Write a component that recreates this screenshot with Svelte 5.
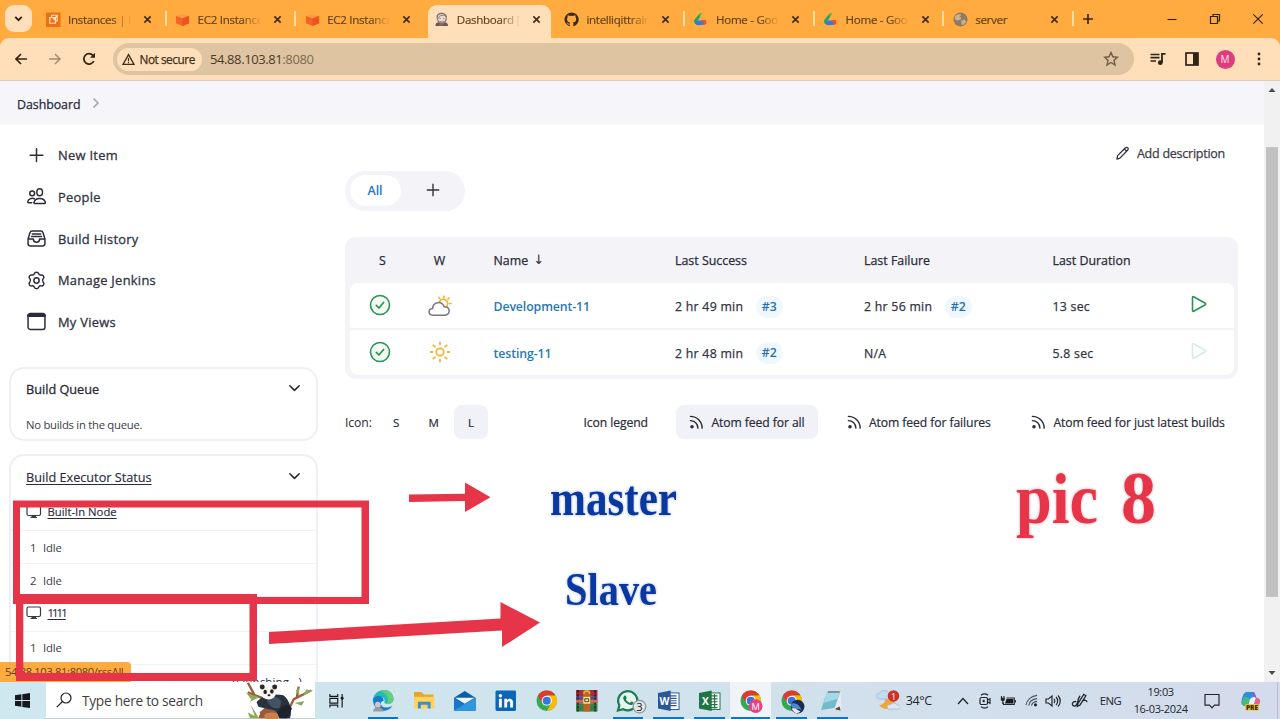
<script>
  const tabs = [
    { icon: 'ec2', title: 'Instances | E', fade: true },
    { icon: 'cube', title: 'EC2 Instance', fade: true },
    { icon: 'cube', title: 'EC2 Instance', fade: true, nosep: true },
    { icon: 'jenkins', title: 'Dashboard [', fade: true, active: true, nosep: true },
    { icon: 'github', title: 'intelliqittrain', fade: true },
    { icon: 'drive', title: 'Home - Goo', fade: true },
    { icon: 'drive', title: 'Home - Goo', fade: true },
    { icon: 'globe', title: 'server' }
  ];
  const tasks = [
    { icon: 'plus', label: 'New Item' },
    { icon: 'people', label: 'People' },
    { icon: 'history', label: 'Build History' },
    { icon: 'gear', label: 'Manage Jenkins' },
    { icon: 'window', label: 'My Views' }
  ];
  const jobs = [
    { weather: 'cloudy', name: 'Development-11', ok: '2 hr 49 min', okNo: '#3', bad: '2 hr 56 min', badNo: '#2', time: '13 sec' },
    { weather: 'sunny', name: 'testing-11', ok: '2 hr 48 min', okNo: '#2', bad: 'N/A', time: '5.8 sec', off: true }
  ];
  const apps = [
    { icon: 'taskview' }, { icon: 'edge', open: true }, { icon: 'folder' }, { icon: 'mail' },
    { icon: 'linkedin' }, { icon: 'chrome' }, { icon: 'winrar' }, { icon: 'whatsapp', open: true },
    { icon: 'word', open: true }, { icon: 'excel', open: true }, { icon: 'chromeM', open: true, active: true },
    { icon: 'chromeB', open: true }, { icon: 'notepad', open: true }
  ];
  const gearPoints = 'M9 1.2c1.200 0 1.800.5 2.100 1.500.3.900 1.200 1.300 2.100 1.100 1.200-.3 2 0 2.500 1 .6 1 .4 1.800-.4 2.600-.7.8-.7 2.300 0 3.100.8.8 1 1.700.4 2.700-.5.9-1.300 1.200-2.500.9-.9-.2-1.800.3-2.100 1.200-.3 1-.9 1.500-2.100 1.500s-1.800-.5-2.100-1.500c-.3-.9-1.200-1.400-2.100-1.200-1.200.3-2 0-2.500-.9-.6-1-.4-1.900.4-2.700.7-.8.7-2.300 0-3.100-.8-.8-1-1.600-.4-2.600.5-1 1.300-1.300 2.500-1 .9.200 1.800-.2 2.100-1.100.3-1 .9-1.500 2.100-1.500z';
</script>

{#snippet chromeLogo()}
  <circle cx="11" cy="11" r="10.500" fill="#34a853" />
  <path d="M1.900 5.700A10.500 10.500 0 0 1 20.100 5.700H11L6.500 13.600z" fill="#e0392d" />
  <path d="M20.100 5.700A10.500 10.500 0 0 1 11 21.500L15.600 13.600 11 5.700z" fill="#fbbc05" />
  <circle cx="11" cy="11" r="5.200" fill="#fff" /><circle cx="11" cy="11" r="4.100" fill="#3575dc" />
{/snippet}

{#snippet favicon(name)}
  <svg class="fav" viewBox="0 0 16 16">
    {#if name === 'ec2'}
      <rect width="15.500" height="15.500" y=".5" fill="#ec7211" /><path d="M4 6h6v6H4zM6 6V3.500h6v6h-2M8 8l4-4" fill="none" stroke="#ffe3c0" stroke-width="1.200" />
    {:else if name === 'cube'}
      <path d="M1 4l7 2.500L15 4v8l-7 3-7-3z" fill="#f26522" /><path d="M1 4l7-2 7 2-7 3z" fill="#ff9a48" /><path d="M8 7l7-3v8l-7 3z" fill="#ef5420" />
    {:else if name === 'jenkins'}
      <path d="M1.500 15c0-3 2-4 3-4h6.500c2 0 4 1 4 4z" fill="#6a5957" /><path d="M3.500 5C4 1 12 0 13 5c.4 4-1 7-4.500 7S3 9 3.500 5z" fill="#eadbd0" stroke="#85766f" stroke-width="1.200" /><path d="M3 5c1-5 9-5 10 0-2-2-4-2-6-1-1 0-2 1-2 3M6 7h1m3 0h1M6 10c2 1 3 1 5 0" fill="none" stroke="#7c6c66" stroke-width="1" /><path d="M6 12.500l3 .5 1 1.500H5z" fill="#b75a50" />
    {:else if name === 'github'}
      <path d="M8 .5a7.500 7.500 0 0 0-2.400 14.600c.4.100.6-.2.600-.4v-1.400c-2 .5-2.600-.9-2.600-.9-.3-.8-.8-1.100-.8-1.100-.7-.5 0-.5 0-.5.8.1 1.200.8 1.200.8.700 1.200 1.800.8 2.200.6.100-.5.300-.8.500-1-1.700-.2-3.500-.8-3.500-3.700 0-.8.3-1.500.8-2-.1-.2-.4-1 .1-2 0 0 .6-.2 2.100.8a7 7 0 0 1 3.800 0c1.500-1 2.100-.8 2.100-.8.4 1 .2 1.800.1 2 .5.500.8 1.200.8 2 0 2.900-1.800 3.500-3.500 3.700.3.200.5.700.5 1.400v2.100c0 .2.100.5.600.4A7.500 7.500 0 0 0 8 .5z" fill="#3c2a18" />
    {:else if name === 'drive'}
      <path d="M7 1.500h3L5 9 4.500 13.500 1.500 12 1 9z" fill="#1ea55b" /><path d="M4.500 14L2 12l3-3h9l-1.500 4.500z" fill="#3678e0" /><path d="M8.500 8.500h5L14.500 12l-2 1.500z" fill="#e55438" /><path d="M7 1.500h3L7 6z" fill="#79c142" />
    {:else}
      <circle cx="8" cy="8" r="7.500" fill="#8c7b65" /><path d="M2 5c2-3 5-3 7-2l-2 2 2 1-1 2-3 1-3-1zM9 9l3-1 2 2-3 4-2-1z" fill="#cbb28f" />
    {/if}
  </svg>
{/snippet}

{#snippet feed()}
  <svg class="feed" viewBox="0 0 16 16"><g fill="none" stroke="#2b2b3a" stroke-width="1.500" stroke-linecap="round"><path d="M1.500 1.500c7 0 12.500 5.500 12.500 12.500M1.500 6c4.500 0 8 3.500 8 8" /></g><circle cx="3.200" cy="12.500" r="1.900" fill="#2b2b3a" /></svg>
{/snippet}

{#snippet monitor()}
  <svg class="monitor" viewBox="0 0 16 14"><rect x="1" y="1" width="13.500" height="9.500" rx="1.500" fill="none" stroke="#3a3a44" stroke-width="1.200" /><path d="M4.500 12.500h6.500M6 10.500h3.500v2H6z" stroke="#3a3a44" fill="#3a3a44" /></svg>
{/snippet}

{#snippet chevron()}
  <svg class="chev" viewBox="0 0 12 12"><path d="M1.700 3.500L6 7.700l4.300-4.200" fill="none" stroke="#2b2b3a" stroke-width="1.500" stroke-linecap="round" stroke-linejoin="round" /></svg>
{/snippet}

<div class="screen">
  <div class="strip">
    <button class="tabmenu" aria-label="Search tabs"><svg viewBox="0 0 12 12"><path d="M3 4.500l3 3 3-3" fill="none" stroke="#2e2010" stroke-width="1.700" /></svg></button>
    {#each tabs as t}
      <div class="tab" class:active={t.active} class:sep={!t.nosep}>
        {@render favicon(t.icon)}
        <span class="title" class:fade={t.fade}>{t.title}</span>
        <svg class="x" viewBox="0 0 10 10"><path d="M1.500 1.500l7 7m0-7l-7 7" stroke="#3a2812" stroke-width="1.700" /></svg>
      </div>
    {/each}
    <svg class="newtab" viewBox="0 0 12 12"><path d="M6 1v10M1 6h10" stroke="#3a2510" stroke-width="1.700" /></svg>
    <div class="winctl">
      <svg viewBox="0 0 12 12"><path d="M1.500 6.500h9" stroke="#2e1e0a" stroke-width="1.100" /></svg>
      <svg viewBox="0 0 12 12"><path d="M1.500 3.500h7v7h-7zM4 3.500v-2h6.500v6.500h-2" fill="none" stroke="#2e1e0a" stroke-width="1.200" /></svg>
      <svg viewBox="0 0 12 12"><path d="M1.300 1.300l9.400 9.400m0-9.400l-9.400 9.400" stroke="#2e1e0a" stroke-width="1.100" /></svg>
    </div>
  </div>

  <div class="toolbar">
    <svg class="nav" viewBox="0 0 14 14"><path d="M13 7H2m5-5L2 7l5 5" fill="none" stroke="#33230f" stroke-width="1.700" /></svg>
    <svg class="nav" viewBox="0 0 14 14"><path d="M1 7h11M7 2l5 5-5 5" fill="none" stroke="#a68d6e" stroke-width="1.500" /></svg>
    <svg class="nav" viewBox="0 0 14 14"><path d="M11.800 9A5.200 5.200 0 1 1 11 3.500l1 1.500" fill="none" stroke="#33230f" stroke-width="1.800" /><path d="M13 .8v5H8z" fill="#33230f" /></svg>
    <div class="omni">
      <span class="chip"><svg viewBox="0 0 14 14"><path d="M7 1.700L13 12.300H1z" fill="none" stroke="#3f301d" stroke-width="1.500" /><path d="M7 5.500v3.300M7 9.800v1.300" stroke="#3f301d" stroke-width="1.300" /></svg>Not secure</span>
      <span class="url">54.88.103.81<i>:8080</i></span>
      <svg class="star" viewBox="0 0 16 16"><path d="M8 1.500l1.900 4.300 4.600.4-3.500 3.100 1 4.700L8 11.500 4 14l1-4.700L1.500 6.200l4.600-.4z" fill="none" stroke="#6d5c46" stroke-width="1.400" /></svg>
    </div>
    <svg class="music" viewBox="0 0 16 14"><path d="M.5 2.500h9M.5 5.700h9M.5 9h5.500" stroke="#2f2415" stroke-width="1.700" /><path d="M12 10.500V1.800h3.500" fill="none" stroke="#2f2415" stroke-width="1.800" /><circle cx="10.300" cy="10.700" r="2.400" fill="#2f2415" /></svg>
    <svg class="panel" viewBox="0 0 14 14"><rect x="1" y="1" width="12" height="12" fill="none" stroke="#2f2415" stroke-width="1.700" /><path d="M8 1h5v12H8z" fill="#2f2415" /></svg>
    <span class="avatar">M</span>
    <svg class="dots" viewBox="0 0 4 14"><g fill="#2f2415"><circle cx="2" cy="2" r="1.400" /><circle cx="2" cy="7" r="1.400" /><circle cx="2" cy="12" r="1.400" /></g></svg>
  </div>

  <div class="view">
    <div class="page">
      <div class="crumbs">Dashboard<svg viewBox="0 0 8 12"><path d="M1.500 1.500L6 6l-4.500 4.500" fill="none" stroke="#a3a3ac" stroke-width="1.500" /></svg></div>
      <div class="cols">
        <aside>
          <nav>
            {#each tasks as t}
              <a class="task" href="#top">
                <svg viewBox="0 0 18 18"><g fill="none" stroke="#2b2b3a" stroke-width="1.400" stroke-linecap="round" stroke-linejoin="round">
                  {#if t.icon === 'plus'}<path d="M9 2.700v12M3 8.700h12" />
                  {:else if t.icon === 'people'}<ellipse cx="12" cy="5" rx="2.700" ry="3.300" /><circle cx="4.900" cy="6" r="2.300" /><path d="M12 10.800c-3 0-5 1.600-5.400 4.100 0 .5.200.8.700.8h9.400c.5 0 .8-.4.700-.8-.4-2.500-2.400-4.100-5.400-4.100zM7 11.100c-2.800-1.200-6.100.5-6.300 3.100 0 .5.200.7.600.7h3.200" />
                  {:else if t.icon === 'history'}<path d="M1 9.500v4.200c0 1.500.9 2.300 2.300 2.300h11.400c1.500 0 2.300-.8 2.300-2.300V9.500l-1.700-5.700C14.900 2.500 14.300 2 13 2H5c-1.300 0-1.900.5-2.300 1.800zM1 9.500h5c0 2 1.500 3 3 3s3-1 3-3h5M5 4.700h8M4.300 7.200h9.400" />
                  {:else if t.icon === 'gear'}<path d={gearPoints} /><circle cx="9" cy="9" r="2.500" />
                  {:else}<rect x="1" y="1.500" width="16" height="15" rx="2" /><path d="M1.500 3.300h15" stroke-width="3" />{/if}
                </g></svg>{t.label}
              </a>
            {/each}
          </nav>
          <section class="box queue">
            <header><b>Build Queue</b>{@render chevron()}</header>
            <p>No builds in the queue.</p>
          </section>
          <section class="box exec">
            <header><b><u>Build Executor Status</u></b>{@render chevron()}</header>
            <div class="node first">{@render monitor()}<u>Built-In Node</u></div>
            <div class="idle"><span>1</span>Idle</div>
            <div class="idle"><span>2</span>Idle</div>
            <div class="node second">{@render monitor()}<u>1111</u></div>
            <div class="idle"><span>1</span>Idle</div>
            <div class="launch">(launching...)</div>
          </section>
        </aside>

        <main>
          <div class="desc"><svg viewBox="0 0 16 16"><path d="M2 14l.8-3.700L11.200 1.900c.8-.7 1.800-.7 2.400 0 .7.700.7 1.700 0 2.400L5.300 12.900zM9.900 3.200l2.600 2.600" fill="none" stroke="#2b2b3a" stroke-width="1.300" stroke-linejoin="round" /></svg>Add description</div>
          <div class="pills"><span class="all">All</span><svg viewBox="0 0 14 14"><path d="M7 1.300v11.400M1.300 7h11.400" stroke="#33333f" stroke-width="1.400" stroke-linecap="round" /></svg></div>
          <div class="table">
            <div class="row head"><span class="c s">S</span><span class="c">W</span><span>Name <em>↓</em></span><span>Last Success</span><span>Last Failure</span><span>Last Duration</span><span></span></div>
            {#each jobs as j}
              <div class="row job">
                <span class="c"><svg class="big" viewBox="0 0 22 22"><circle cx="11" cy="11" r="9.500" fill="#f3fbf5" stroke="#2a9454" stroke-width="1.600" /><path d="M7.300 11.300l2.600 2.700 4.700-5.500" fill="none" stroke="#2a9454" stroke-width="1.700" stroke-linecap="round" stroke-linejoin="round" /></svg></span>
                <span class="c"><svg class="wx" viewBox="0 0 24 22">
                  {#if j.weather === 'cloudy'}
                    <g stroke="#f0b83c" stroke-width="1.700" fill="none" stroke-linecap="round"><path d="M11.500 6.500a4.300 4.300 0 1 1 6.500 5.300M16 1v1.500M11 2.500l.9 1.200M21 3l-1 1.200M23 8.500h-1.500" /></g>
                    <path d="M5 20.200c-5 0-5.300-6.200-.4-6.600C5 6.500 14 5.500 16 11.800c7-.2 6.500 8.400 1 8.400z" fill="#fff" stroke="#77777f" stroke-width="1.500" />
                  {:else}
                    <g stroke="#f0b83c" stroke-width="1.800" fill="none" stroke-linecap="round"><circle cx="12" cy="11" r="3.700" /><path d="M12 1.500v2M12 18.500v2M2.500 11h2M19.500 11h2M5.300 4.300l1.400 1.400M17.300 16.300l1.400 1.400M5.300 17.700l1.400-1.400M17.300 5.700l1.400-1.400" /></g>
                  {/if}
                </svg></span>
                <span class="name">{j.name}</span>
                <span>{j.ok}<b class="no">{j.okNo}</b></span>
                <span>{j.bad}{#if j.badNo}<b class="no">{j.badNo}</b>{/if}</span>
                <span>{j.time}</span>
                <span class="c"><svg class="play" class:off={j.off} viewBox="0 0 18 18"><path d="M2.500 2.500v13c0 .7.6 1 1.200.7L15.300 9.700c.6-.4.6-1 0-1.400L3.700 1.800c-.6-.3-1.200 0-1.200.7z" fill="none" stroke="#2a9454" stroke-width="1.600" /></svg></span>
              </div>
            {/each}
          </div>
          <div class="foot">
            <span class="lbl">Icon:</span><span class="size">S</span><span class="size">M</span><span class="size on">L</span>
            <span class="legend">Icon legend</span>
            <span class="atom on">{@render feed()}Atom feed for all</span>
            <span class="atom fail">{@render feed()}Atom feed for failures</span>
            <span class="atom last">{@render feed()}Atom feed for just latest builds</span>
          </div>
        </main>
      </div>
    </div>
    <div class="scroll"><svg viewBox="0 0 8 6"><path d="M4 1l3.500 4h-7z" fill="#4c4c4c" /></svg><div class="thumb"></div><svg viewBox="0 0 8 6"><path d="M4 5L.5 1h7z" fill="#4c4c4c" /></svg></div>
    <div class="status">54.88.103.81:8080/rssAll</div>
  </div>

  <footer class="taskbar">
    <div class="start"><svg viewBox="0 0 16 16"><path d="M0 2.300L6.800 1.300v6.200H0zM7.800 1.200L16 0v7.500H7.800zM0 8.500h6.800v6.200L0 13.700zM7.800 8.500H16V16l-8.200-1.200z" fill="#15181c" /></svg></div>
    <div class="search">
      <svg class="lens" viewBox="0 0 16 16"><circle cx="10" cy="6" r="5" fill="none" stroke="#222" stroke-width="1.200" /><path d="M6.500 9.500L.8 15.200" stroke="#222" stroke-width="1.200" /></svg>
      <span>Type here to search</span>
      <svg class="panda" viewBox="0 0 70 37">
        <path d="M2 0l7 13 14 5M68 8L50 17 40 37M9 13L2 10M53 16l2-12M23 37l-8-7" fill="none" stroke="#9b5c3c" stroke-width="2.500" />
        <path d="M0 10l12 5-7 2zM14 15l-10 5 4-7zM5 23l8 13-3 1zM2 31l12 6H4zM55 5l1 9-4-6zM70 8l-11 6 4-7zM61 19l-10 2 7 3z" fill="#8daa58" />
        <path d="M13 37c4-15 13-14 22-7l-2 7z" fill="#9d5936" /><ellipse cx="27" cy="35" rx="8" ry="4" fill="#c68254" />
        <path d="M11 20c7-8 20-9 28-7 6 4 10 15 7 24H35c-2-7-5-9-10-9l-12-3z" fill="#28323e" />
        <path d="M26 15c9-2 13 4 9 11-6 2-11-2-13-7z" fill="#435365" />
        <path d="M33 32c3-9 12-12 15-5l-5 10h-8z" fill="#1c232b" />
        <ellipse cx="23.500" cy="10" rx="8" ry="7.500" fill="#f7f5f0" /><circle cx="17" cy="4.500" r="2.600" fill="#27292c" /><circle cx="30" cy="4.500" r="2.600" fill="#27292c" />
        <ellipse cx="20" cy="9.500" rx="1.800" ry="2.300" fill="#222" /><ellipse cx="27" cy="9" rx="1.800" ry="2.300" fill="#222" /><ellipse cx="24" cy="13" rx="1.500" ry="1" fill="#222" />
      </svg>
    </div>
    <div class="apps">
      {#each apps as a}
        <div class="app" class:view-switch={a.icon === 'taskview'} class:open={a.open} class:cur={a.active}>
          <svg viewBox="0 0 22 22" overflow="visible">
            {#if a.icon === 'taskview'}
              <path d="M4 4v2.500h8V4M4 18v-2.500h8V18M4 8.500h8v5H4zM16.500 4v14" fill="none" stroke="#15181c" stroke-width="1.200" /><circle cx="16.500" cy="8.500" r="1.500" fill="#15181c" />
            {:else if a.icon === 'edge'}
              <path d="M1 13C0 5 6 0 12 0c7 0 10 5 10 9 0 4-3 6-7 5-2 0-3-1-2-3 0-5-8-6-12 2z" fill="#28b9ba" /><path d="M12 0c7 0 10 5 10 9 0 4-3 6-7 5 2-2 3-10-7-13z" fill="#62d079" /><path d="M1 9c4-5 11-3 11 2-5 1-3 7 2 7 3 0 5-1 7-2-4 7-20 9-20-7z" fill="#167bc8" /><circle cx="6" cy="15" r="3" fill="#c8c9ce" /><path d="M1 22c1-6 9-6 11 0z" fill="#9a999e" />
            {:else if a.icon === 'folder'}
              <path d="M1 2h8l2 2.500h10V8H1z" fill="#e6a52d" /><path d="M1 7h21v12H1z" fill="#fcd45f" /><path d="M5 19v-7h13v7h-3v-4H8v4z" fill="#3b8fca" />
            {:else if a.icon === 'mail'}
              <path d="M0 8L11 1l11 7v13H0z" fill="#0d5ea5" /><path d="M1 8l10 6 10-6z" fill="#eef5fb" /><path d="M0 8l11 7 11-7v13H0z" fill="#1976cf" /><path d="M0 21L22 8v13z" fill="#2f97de" />
            {:else if a.icon === 'linkedin'}
              <rect x=".5" y=".5" width="21" height="21" rx="1.500" fill="#0a66b8" /><circle cx="5.500" cy="6" r="1.800" fill="#fff" /><path d="M4 9h3v9H4zM9.500 9h2.800v1.300c2-2.600 6.200-1.500 6.200 2.300V18h-3v-4.500c0-3-3-2.600-3 0V18h-3z" fill="#fff" />
            {:else if a.icon === 'chrome'}{@render chromeLogo()}
            {:else if a.icon === 'winrar'}
              <path d="M0 0h22v7H0z" fill="#a62e38" /><path d="M0 7h22v7H0z" fill="#4550a5" /><path d="M0 14h22v8H0z" fill="#37814a" /><path d="M2 0v22M19.500 0v22" stroke="#261b20" stroke-width="1.500" stroke-dasharray="3 1" /><path d="M7.500 0h7v22h-7z" fill="#b86628" /><path d="M0 10h22v3H0z" fill="#db6a3a" /><rect x="7.500" y="7" width="7" height="7" fill="#ffe895" /><path d="M9 9h4v3H9z" fill="none" stroke="#463720" /><path d="M8 4c0-4 6-4 6 0" fill="none" stroke="#f2b537" stroke-width="1.500" />
            {:else if a.icon === 'whatsapp'}
              <path d="M1 21l1.400-5.300A9.800 9.800 0 1 1 6.300 19.600z" fill="#e8f5ee" stroke="#1b7c58" stroke-width="2.300" /><path d="M7.500 6c1-1 1.800 0 2.300 1.800.4 1.200-1.300 1.200-.2 2.700 1.200 1.700 2.500 2.500 3.500 2.500 1 0 1-1.500 2-1.200 2 .8 2.200 1.200 1.200 2.700-2.500 3-10-2-10-6.700z" fill="#1b7c58" /><circle cx="23" cy="17" r="6.500" fill="#dfe4e7" stroke="#8f969b" stroke-width="1.300" /><text x="23" y="21.300" text-anchor="middle" font-size="11.500" fill="#222">3</text>
            {:else if a.icon === 'word' || a.icon === 'excel'}
              <rect x="11" y="3" width="10.500" height="17" fill="#fff" stroke={a.icon === 'word' ? '#2b579a' : '#217346'} />
              <path d={a.icon === 'word' ? 'M12 6h7M12 8.500h7M12 11h7M12 13.500h7M12 16h7' : 'M12 6h7M12 9h7M12 12h7M12 15h7M12 18h7M16 4v15'} stroke={a.icon === 'word' ? '#2b579a' : '#217346'} stroke-width="1.200" />
              <path d="M0 3L13 .5v21L0 19z" fill={a.icon === 'word' ? '#2b579a' : '#1d7444'} /><text x="6.500" y="15" text-anchor="middle" font-size="10.500" font-weight="700" fill="#fff">{a.icon === 'word' ? 'W' : 'X'}</text>
            {:else if a.icon === 'chromeM'}{@render chromeLogo()}<circle cx="16" cy="16.500" r="7" fill="#e5428a" /><text x="16" y="20" text-anchor="middle" font-size="9.500" fill="#fff">M</text>
            {:else if a.icon === 'chromeB'}{@render chromeLogo()}<circle cx="17" cy="17" r="7" fill="#172c57" /><path d="M10 15c4-4 10 1 11 6-4-4-8 2-11-6z" fill="#4c87c6" /><path d="M11 19c4-1 6 2 9 3-5 4-8 0-9-3z" fill="#e8e8ee" />
            {:else}
              <path d="M7 2l13-1 1 18-15 1z" fill="#e8ecef" /><path d="M6 2.500L20 1 14 18.500 0 20.500z" fill="#77b9cc" /><path d="M6 2.500L20 1l-3 8L3 13z" fill="#a4dae7" /><path d="M15 19l4-2 1 4-5-1z" fill="#5b4638" /><path d="M7 2h12" stroke="#687980" stroke-width="1.500" />
            {/if}
          </svg>
        </div>
      {/each}
    </div>
    <div class="tray">
      <svg class="wthr" viewBox="0 0 24 24"><path d="M8 3c5 2 8 7 12 12-3 6-13 7-17 1 6 0 8-6 5-13z" fill="#eea63b" /><path d="M3 10c-4-1-3-6 1-6 2-4 8-3 9 1 4 0 4 5 0 5z" fill="#c3dcf2" stroke="#8fb2d6" stroke-width=".7" /><path d="M12 20c-2-3 0-5 2-4 2-3 6-2 7 0 4 0 4 4 1 4z" fill="#dce8f4" stroke="#9ab7d6" stroke-width=".7" /><circle cx="17.500" cy="7" r="5.800" fill="#cf3028" /><text x="17.500" y="10.500" text-anchor="middle" font-size="9" fill="#fff">1</text></svg>
      <span class="temp">34°C</span>
      <svg class="up" viewBox="0 0 14 14"><path d="M2 10l5-5.500L12 10" fill="none" stroke="#23272d" stroke-width="1.300" /></svg>
      <svg class="cam" viewBox="0 0 14 16"><g fill="none" stroke="#23272d" stroke-width="1.200"><rect x="2" y="4.500" width="7.500" height="7" rx="1.500" /><path d="M9.500 7l2.500-1.300v4.600L9.500 9M3 2.300c2-1.500 5-1.500 7 0M3 13.700c2 1.500 5 1.500 7 0" /></g><circle cx="5.700" cy="8" r="1.200" fill="#23272d" /></svg>
      <svg class="bat" viewBox="0 0 16 14"><path d="M6.500 4h7.700v6.500H3.500V8.500" fill="none" stroke="#23272d" stroke-width="1.200" /><path d="M6.500 5h6.700V9.500H5z" fill="#14171b" /><path d="M15.400 6v2.500M1.500 2v2M4 2v2M2.800 6.500V10" fill="none" stroke="#23272d" stroke-width="1.100" /><path d="M.8 3.800h4v1.700c0 2-4 2-4 0z" fill="#23272d" /></svg>
      <svg class="wifi" viewBox="0 0 14 14"><g fill="none" stroke="#4a535e" stroke-width="1.200"><path d="M1 12C2 6 7 2 13 1.500M4 12.500C4.500 8.500 8 5.500 13 5M7 12.500c.5-2.500 2.500-4.200 6-4.500" /></g><circle cx="11.300" cy="11.700" r="1.700" fill="#23272d" /></svg>
      <svg class="vol" viewBox="0 0 16 14"><g fill="none" stroke="#23272d" stroke-width="1.200"><path d="M1 5h2.500L7 2v10L3.500 9H1zM9 5c1 1 1 3 0 4M11 3c2.200 2.200 2.200 5.800 0 8M13 1.500c3 3 3 8 0 11" /></g></svg>
      <svg class="pen" viewBox="0 0 16 16"><path d="M6.500 11L12 2.200l2 1.300-5.500 8.700L6 13.500zM5 9C1 8.500 0 12.500 3 13.200c4 .8 2.500-6.200 5.500-9.700M10.500 8.500c3-1.500 4.500-.5 4.500 1.200" fill="none" stroke="#23272d" stroke-width="1.200" /></svg>
      <span class="eng">ENG</span>
      <div class="clock"><span>19:03</span><span>16-03-2024</span></div>
      <svg class="note" viewBox="0 0 16 16"><path d="M1 1.500h14v10.700h-4.500L8 14.800l-2.500-2.600H1z" fill="none" stroke="#23272d" stroke-width="1.200" /></svg>
      <svg class="cop" viewBox="0 0 20 20"><path d="M6 1h6c2 0 2 2 3 5h-4L8 14H3c-3 0-3-3-2-6 1-4 2-7 5-7z" fill="#2c8ee0" /><path d="M2 8c2-4 5-2 7 0l-2 7H3c-3 0-2-4-1-7z" fill="#48b979" /><path d="M11 1c4 0 3 5 5 6 4 1 3 4 2 7l-2 3h-5l3-9z" fill="#a650c6" /><path d="M9 8l4-2 2 1-3 9H7z" fill="#f4eef2" /><path d="M15 7c5 0 4 5 2 8h-4z" fill="#e66684" /><rect x="4" y="13" width="14" height="6.500" rx="1.500" fill="#f1c233" /><text x="11" y="19" text-anchor="middle" font-size="6.500" font-weight="800" fill="#33270a">PRE</text></svg>
    </div>
  </footer>

  <svg class="notes" viewBox="0 0 1280 719">
    <g fill="#e63548">
      <path d="M13 500.500h356V604H13zM20 507.500V597h341.500v-89.500z" fill-rule="evenodd" />
      <path d="M16 594h241v87H16zM23.300 604v69h226.200v-69z" fill-rule="evenodd" />
      <path d="M409 494.500l56-.8v-11.200l25.500 14.800L465 512v-11l-56 1zM269 632l231.500-13.500V602L540 622.500 502 647v-16.500L269 644z" />
      <g class="glow red"><text x="1016" y="523" font-size="72" textLength="82" lengthAdjust="spacingAndGlyphs">pic</text><text x="1121" y="523" font-size="73" textLength="35" lengthAdjust="spacingAndGlyphs">8</text></g>
    </g>
    <g class="glow blue" fill="#0b37a0"><text x="550" y="515" font-size="50" textLength="127" lengthAdjust="spacingAndGlyphs">master</text><text x="565" y="605" font-size="46" textLength="92" lengthAdjust="spacingAndGlyphs">Slave</text></g>
  </svg>
</div>

<style>
  :global(body) { margin: 0; overflow: hidden; }
  .screen { position: relative; width: 1280px; height: 719px; overflow: hidden; display: flex; flex-direction: column; background: #fff; font-family: "Open Sans", "Noto Sans", sans-serif; font-size: 12.500px; color: #2b2b3a; }
  .screen *, .screen { box-sizing: border-box; }
  svg { display: block; flex: none; }
  i, em { font-style: normal; }

  .strip { height: 38px; flex: none; background: #ffab40; display: flex; align-items: stretch; padding-left: 5px; }
  .tabmenu { width: 27px; height: 27px; margin: 5px 4px 0 0; padding: 0; border: 0; border-radius: 9px; background: #ffdfba; display: grid; place-items: center; }
  .tabmenu svg { width: 13px; height: 13px; }
  .tab { position: relative; width: 129.600px; flex: none; display: flex; align-items: center; padding-left: 9.500px; font-size: 11.600px; color: #5d401c; }
  .tab.sep::after { content: ""; position: absolute; right: -1px; top: 11px; width: 2px; height: 15px; background: #ffdc9f; }
  .tab.active::before { content: ""; position: absolute; left: 3px; right: 3px; top: 5px; bottom: 0; border-radius: 9px 9px 0 0; background: #ffdfba; }
  .tab > * { position: relative; }
  .fav { width: 15px; height: 15px; }
  .title { width: 66px; margin-left: 7.500px; white-space: nowrap; letter-spacing: -.3px; -webkit-text-stroke: .15px; }
  .fade { -webkit-mask-image: linear-gradient(90deg, #000 65%, transparent 97%); mask-image: linear-gradient(90deg, #000 65%, transparent 97%); }
  .x { width: 9px; height: 9px; margin-left: 9px; }
  .newtab { width: 12px; height: 12px; margin: 13px 0 0 9px; }
  .winctl { margin-left: auto; display: flex; align-items: center; gap: 31px; padding-right: 16px; }
  .winctl svg { width: 12px; height: 12px; }

  .toolbar { height: 43px; flex: none; background: #ffdfba; border-bottom: 1.500px solid #dccbb8; display: flex; align-items: center; padding-left: 14px; gap: 20px; border-radius: 9px 9px 0 0; box-shadow: 0 -9px 0 0 #ffab40; clip-path: inset(0); }
  .nav { width: 14px; height: 14px; }
  .strip { box-shadow: 0 10px 0 #ffab40; }
  .toolbar { z-index: 1; }
  .omni { width: 1020.500px; height: 32px; margin-left: -3px; border-radius: 16px; background: #dfc4a1; display: flex; align-items: center; padding-left: 4px; }
  .chip { width: 85px; height: 23px; border-radius: 12px; background: #ffdfba; display: flex; align-items: center; gap: 4.500px; padding-left: 5px; font-size: 11.800px; -webkit-text-stroke: .25px; letter-spacing: -.45px; color: #3f301d; white-space: nowrap; }
  .chip svg { width: 13px; height: 13px; }
  .url { margin-left: 8px; font-size: 13px; letter-spacing: -.4px; color: #4b3b28; }
  .url i { color: #7b6a54; }
  .star { width: 16px; height: 16px; margin-left: auto; margin-right: 15px; }
  .music { width: 16px; height: 14px; margin-left: -3.500px; }
  .panel { width: 14px; height: 14px; margin-left: -1.500px; }
  .avatar { width: 19px; height: 19px; margin-left: -3px; border-radius: 50%; background: #dd3d7c; color: #ffe3ef; font-size: 10px; display: grid; place-items: center; }
  .dots { width: 4px; height: 14px; margin-left: 2px; }

  .view { position: relative; height: 601px; flex: none; display: flex; overflow: hidden; }
  .page { width: 1264px; height: 601px; overflow: hidden; }
  .crumbs { height: 44px; background: #f5f5fa; display: flex; align-items: center; gap: 11.500px; padding: 2px 0 0 17px; font-size: 12.400px; letter-spacing: -.05px; -webkit-text-stroke: .25px; }
  .crumbs svg { width: 8px; height: 12px; margin-top: -3px; }
  .cols { display: flex; height: 557px; }
  aside { width: 345px; padding: 9.300px 0 0 9px; flex: none; }
  nav { height: 233px; }
  .task { height: 41.700px; display: flex; align-items: center; gap: 12.500px; padding-left: 17.500px; color: #33333f; text-decoration: none; font-size: 12.900px; letter-spacing: .28px; -webkit-text-stroke: .3px; }
  .task svg { width: 19px; height: 19px; }
  .box { width: 309px; border: 2px solid #efeff5; border-radius: 15px; background: #fff; }
  .box header { height: 39px; padding: 0 15px 0 15px; display: flex; align-items: center; justify-content: space-between; font-size: 12.700px; }
  .box b { font-weight: 400; -webkit-text-stroke: .3px; }
  .box u { text-underline-offset: 2px; text-decoration-thickness: 1px; }
  .chev { width: 13px; height: 13px; }
  .queue { height: 74px; margin-bottom: 13px; }
  .queue p { margin: 6.500px 0 0 15px; font-size: 11.300px; line-height: 20px; letter-spacing: -.27px; color: #3c3c46; }
  .exec { height: 300px; font-size: 11.300px; }
  .exec header { height: 40.500px; }
  .exec u { -webkit-text-stroke: .15px; }
  .node { height: 34.500px; display: flex; align-items: center; gap: 5.500px; padding-left: 15px; border-bottom: 1px solid #f1f1f5; }
  .node.first { height: 34.500px; padding-bottom: 3.500px; }
  .node.second { padding-bottom: 2.500px; }
  .node.second u { letter-spacing: -1.900px; padding-right: 1.900px; }
  .monitor { width: 16px; height: 14px; }
  .idle { height: 33px; display: flex; align-items: center; padding-left: 19px; border-bottom: 1px solid #f3f3f7; color: #3c3c46; letter-spacing: -.1px; }
  .idle span { width: 13px; }
  .launch { text-align: right; padding: 8px 14px 0; line-height: 18px; letter-spacing: .2px; }

  main { position: relative; width: 893px; flex: none; }
  .desc { height: 45.500px; padding: 11.500px 13px 0 0; display: flex; align-items: center; justify-content: flex-end; gap: 7px; -webkit-text-stroke: .25px; letter-spacing: -.25px; color: #3c3c48; }
  .desc svg { width: 15px; height: 15px; }
  .pills { width: 120px; height: 40px; border-radius: 20px; background: #f3f3f8; padding: 4.500px; display: flex; align-items: center; }
  .pills .all { width: 51px; height: 31px; border-radius: 16px; background: #fff; color: #1f78c4; font-weight: 600; display: grid; place-items: center; }
  .pills svg { width: 14px; height: 14px; margin-left: 25px; margin-top: -1px; }
  .table { margin-top: 26.500px; height: 142px; border-radius: 11px; background: #f3f3f8; padding: 0 4.500px; }
  .row { display: grid; grid-template-columns: 60px 60px 181.500px 189px 188.500px 136.500px 1fr; align-items: center; }
  .row > span { padding-left: 24px; display: flex; align-items: center; white-space: nowrap; }
  .row > .c { padding: 0; justify-content: center; }
  .row .s { padding-left: 6px; }
  .head { height: 46px; -webkit-text-stroke: .25px; font-size: 12.400px; }
  .head em { margin-left: 5px; font-size: 13px; line-height: 12px; font-family: "DejaVu Sans", sans-serif; -webkit-text-stroke: 0; }
  .job { height: 45px; background: #fff; margin-bottom: 1.500px; border-radius: 8px 8px 2px 2px; -webkit-text-stroke: .25px; font-size: 12.300px; letter-spacing: .27px; color: #33333f; }
  .job > span:not(.c) { padding-top: 2px; }
  .job + .job { border-radius: 2px 2px 8px 8px; }
  .big { width: 22px; height: 22px; margin-top: -1px; }
  .wx { width: 24px; height: 22px; }
  .row > .name { color: #1f78b8; font-weight: 600; letter-spacing: -.1px; -webkit-text-stroke: 0; }
  .no { margin-left: 12.500px; padding: 0 6px; height: 22px; line-height: 22px; border-radius: 11px; background: #eff8ff; color: #1f6fb2; font-weight: 600; -webkit-text-stroke: 0; letter-spacing: 0; }
  .play { width: 18px; height: 18px; margin-top: -3px; }
  .play.off { opacity: .17; }
  .foot { height: 34px; margin-top: 26px; display: flex; align-items: center; white-space: nowrap; -webkit-text-stroke: .2px; letter-spacing: -.1px; font-size: 12.200px; }
  .lbl { width: 34px; -webkit-text-stroke: 0; }
  .size { width: 34px; height: 34px; margin-right: 3.500px; display: grid; place-items: center; font-size: 11.500px; }
  .on { background: #f1f1f8; border-radius: 8px; }
  .legend { margin-left: 92px; width: 92.500px; }
  .atom { height: 34px; display: flex; align-items: center; gap: 7.500px; padding-left: 13px; }
  .atom.on { width: 142px; }
  .feed { width: 15px; height: 15px; }
  .atom.fail { margin-left: 15.500px; width: 184.500px; }
  .scroll { width: 16px; background: #f1f1f1; display: flex; flex-direction: column; align-items: center; padding: 6px 0; }
  .scroll svg { width: 8px; height: 6px; }
  .thumb { width: 12px; height: 450px; margin: 54px 0 auto; background: #c1c1c1; }
  .status { position: absolute; left: 0; bottom: 0; width: 131px; height: 20px; padding-left: 5px; border-radius: 0 4px 0 0; background: #ffab40; color: #5c421d; font-size: 11.200px; line-height: 19px; letter-spacing: -.36px; white-space: nowrap; }

  .taskbar { height: 37px; flex: none; display: flex; background: linear-gradient(90deg, #cfe7ee, #d0e3ec 50%, #d4dbec); color: #23272d; }
  .start { width: 45.500px; display: grid; place-items: center; }
  .start svg { width: 15px; height: 15px; }
  .search { width: 269px; background: #fff; border-bottom: 1px solid #c5cdd1; display: flex; align-items: center; padding-left: 10px; font-size: 13.700px; color: #3f3f42; white-space: nowrap; letter-spacing: -.27px; }
  .lens { width: 16px; height: 16px; margin-right: 10.500px; }
  .panda { width: 67px; height: 37px; margin-left: auto; margin-right: 2px; }
  .apps { display: flex; }
  .app { width: 40.850px; display: flex; justify-content: center; position: relative; padding-top: 8px; }
  .app.view-switch { width: 48px; padding-right: 3px; }
  .app svg { width: 21.500px; height: 21.500px; }
  .app.open::after { content: ""; position: absolute; left: 5px; right: 5px; bottom: 0; height: 2.500px; background: #1673b8; }
  .app.cur { background: #f0f4f8; }
  .app.cur::after { left: 1px; right: 1px; }
  .tray { display: flex; align-items: center; flex: 1; padding-left: 23px; border-right: 1px solid #b4bccb; margin-right: 2px; font-size: 12px; }
  .wthr { width: 24px; height: 24px; }
  .temp { width: 50px; margin-left: 6px; font-size: 12.500px; letter-spacing: -.3px; }
  .up { width: 14px; height: 14px; margin-right: 8px; }
  .cam { width: 14px; height: 16px; margin-right: 8px; }
  .bat { width: 16px; height: 14px; margin-right: 9px; }
  .wifi { width: 13px; height: 13px; margin-right: 7px; }
  .vol { width: 16px; height: 14px; margin-right: 10px; }
  .pen { width: 17px; height: 17px; margin-right: 12px; }
  .eng { width: 22px; font-size: 11.300px; letter-spacing: -.4px; }
  .clock { width: 78px; display: flex; flex-direction: column; align-items: center; font-size: 11px; line-height: 16.500px; letter-spacing: -.35px; }
  .note { width: 16px; height: 16px; margin-left: 4px; }
  .cop { width: 20px; height: 20px; margin-left: 21px; }

  .notes { position: absolute; left: 0; top: 0; width: 1280px; height: 719px; pointer-events: none; font-family: "Liberation Serif", serif; font-weight: 700; }
  .blue { filter: drop-shadow(0 0 1.500px #9fb6ee); }
  .red { filter: drop-shadow(0 0 1.500px #f5aab2); }
</style>
